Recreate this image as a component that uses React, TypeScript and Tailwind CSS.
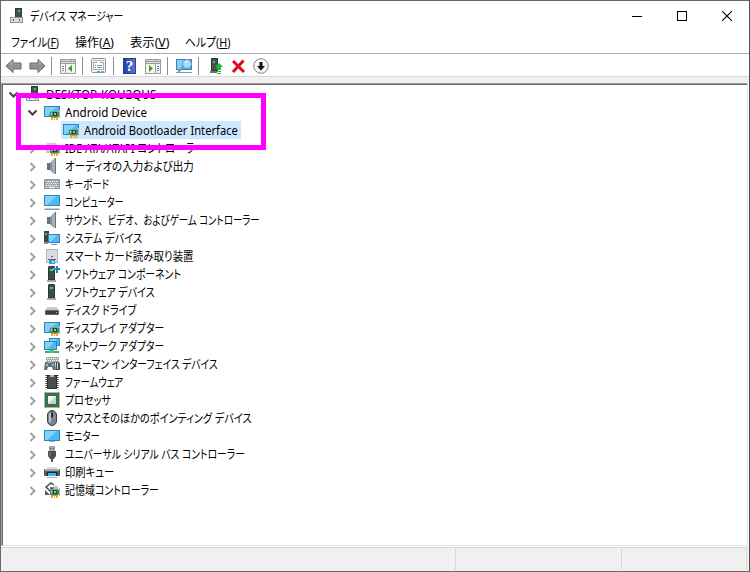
import React, { useLayoutEffect, useRef, useState } from 'react';

function Fit({ w, children, className = '' }: { w: number; children: React.ReactNode; className?: string }) {
  const ref = useRef<HTMLSpanElement>(null);
  const [scale, setScale] = useState(1);
  useLayoutEffect(() => {
    const measure = () => {
      if (ref.current && ref.current.offsetWidth) setScale(w / ref.current.offsetWidth);
    };
    measure();
    document.fonts.ready.then(measure);
  }, [w]);
  return (
    <span className={`block shrink-0 pt-0.5 whitespace-nowrap ${className}`} style={{ width: w }}>
      <span ref={ref} className="inline-block origin-left whitespace-nowrap" style={{ transform: `scaleX(${scale})` }}>
        {children}
      </span>
    </span>
  );
}

/** Keeps the full-width advance of the ideographic comma while kana stay proportional. */
const spaced = (label: string) =>
  label.split(/(、)/).map((part, i) =>
    part === '、' ? <span key={i} className="[font-feature-settings:normal]">、</span> : part,
  );

type SvgProps = { children: React.ReactNode; w?: number; h?: number };
const Svg = ({ children, w = 16, h = 16 }: SvgProps) => (
  <svg width={w} height={h} viewBox={`0 0 ${w} ${h}`} className="block shrink-0">
    {children}
  </svg>
);

const Card = () => (
  <g>
    <rect x="15" y="6" width="1" height="8" fill="#a9b2ae" />
    <rect x="6" y="7" width="9" height="6" fill="#3f8a6c" />
    <rect x="6" y="7" width="9" height="1" fill="#76b398" />
    <rect x="9" y="8" width="4" height="4" fill="#1d4a3a" />
    <rect x="10" y="9" width="2" height="2" fill="#8cc4ae" />
    <rect x="7" y="9" width="1" height="2" fill="#b4dccb" />
    <rect x="7" y="13" width="7" height="1" fill="#e29a12" />
    <path d="M7 14h2v2H7zM10 14h1v2h-1zM12 14h2v2h-2z" fill="#f7ad1b" />
  </g>
);

const Blue = ({ x, y, w, h }: { x: number; y: number; w: number; h: number }) => (
  <g>
    <rect x={x} y={y} width={w} height={h} fill="#2f86b8" />
    <rect x={x + 1} y={y + 1} width={w - 2} height={h - 2} fill="#4db8f6" />
    <path d={`M${x + 1} ${y + 1}h${w - 4}L${x + 3} ${y + h - 1}h-2z`} fill="#84d1fc" />
  </g>
);

const Tower = () => (
  <g>
    <path d="M5 1l1-1h5l1 1v13H5z" fill="#30363a" />
    <rect x="6" y="1" width="5" height="12" fill="#43494d" />
    <rect x="7" y="3" width="3" height="2" fill="#28e45a" />
    <rect x="4" y="14" width="9" height="2" fill="#a3a7aa" />
  </g>
);

const Speaker = () => (
  <g>
    <path d="M3 5h3v7H3z" fill="#697078" />
    <path d="M6 5l4-4v15l-4-4z" fill="#858e96" />
    <path d="M8 3l3-3v16l-3-3z" fill="#a7afb7" />
    <path d="M11.5 0v16" stroke="#6b747c" />
  </g>
);

const ICONS: Record<string, React.ReactNode> = {
  adapter: <g><Blue x={0} y={2} w={16} h={11} /><Card /></g>,
  ide: (
    <g>
      <path d="M3 3h9l3 5v5H2V8z" fill="#c9cccf" />
      <Card />
    </g>
  ),
  speaker: <Speaker />,
  keyboard: (
    <g>
      <rect x="0" y="3" width="16" height="10" fill="#8f979d" />
      <rect x="1" y="4" width="14" height="8" fill="#a4abb0" />
      <path d="M2 5.5h12M3 7.5h11M2 9.5h12" stroke="#f7f8f9" strokeDasharray="1 1" />
      <path d="M2 11.5h1M5 11.5h6M13 11.5h1" stroke="#fff" />
    </g>
  ),
  computer: (
    <g>
      <Blue x={0} y={1} w={16} h={11} />
      <rect x="1" y="14" width="14" height="1" fill="#c3ced8" />
      <rect x="0" y="15" width="16" height="1" fill="#8fa3b5" />
    </g>
  ),
  system: (
    <g>
      <rect x="0" y="1" width="5" height="12" fill="#3f4548" />
      <rect x="1" y="3" width="2" height="2" fill="#28d35d" />
      <rect x="0" y="12" width="4" height="2" fill="#8b9194" />
      <Blue x={4} y={4} w={12} h={9} />
      <rect x="7" y="14" width="6" height="1" fill="#8499a8" />
    </g>
  ),
  smartcard: (
    <g>
      <rect x="2" y="1" width="12" height="14" rx="1" fill="#aab2b9" />
      <rect x="3" y="2" width="10" height="12" fill="#d9dde1" />
      <rect x="7" y="8" width="2" height="1" fill="#55606a" />
      <rect x="4" y="11" width="8" height="1" fill="#5c6871" />
      <rect x="5" y="12" width="6" height="4" fill="#2ca5e8" />
      <rect x="8" y="13" width="2" height="2" fill="#a5dcfa" />
    </g>
  ),
  component: (
    <g>
      <g transform="translate(-1 0)"><Tower /></g>
      <path d="M12 0h2v2h2v2h-2v3h-2V4h-2V2h2z" fill="#1387d2" />
      <path d="M9 2h2v2H9z" fill="#4bb2f0" />
    </g>
  ),
  software: <g transform="translate(-1 0)"><Tower /></g>,
  disk: (
    <g>
      <path d="M3 5h10l2 4H1z" fill="#c8cbce" />
      <rect x="1" y="8" width="14" height="5" rx="1" fill="#64696d" />
      <rect x="2" y="9" width="12" height="3" fill="#383d40" />
      <rect x="12" y="10" width="1" height="1" fill="#55eb77" />
    </g>
  ),
  network: (
    <g>
      <Blue x={5} y={0} w={11} h={8} />
      <Blue x={0} y={3} w={13} h={9} />
      <path d="M1 14h14" stroke="#46aa55" strokeWidth="2" />
      <rect x="5" y="12" width="5" height="3" fill="#4ec963" />
    </g>
  ),
  hid: (
    <g>
      <path d="M2 1h13v6H2z" fill="#a5adb3" />
      <path d="M3 2.5h12M2 4.5h13" stroke="#fff" strokeDasharray="1 1" />
      <path d="M1 6h2l1 1h4l1-1h2l1 8H9l-1-3H4l-1 3H0z" fill="#61707a" />
      <circle cx="3" cy="9" r="1" fill="#c4cdd3" />
      <circle cx="9" cy="9" r="1" fill="#c4cdd3" />
      <path d="M12 6h2q2 0 2 3v5h-4z" fill="#424e56" />
      <path d="M13.5 7v6" stroke="#d4d9dc" />
    </g>
  ),
  firmware: (
    <g>
      <path d="M2.5 1v14M13.5 1v14" stroke="#343434" strokeWidth="2" strokeDasharray="1 1" />
      <rect x="3" y="1" width="10" height="14" fill="#303234" />
      <rect x="4" y="2" width="8" height="12" fill="#4b4d4f" />
      <path d="M6 1h4v2H6z" fill="#b8babb" />
    </g>
  ),
  processor: (
    <g>
      <rect x=".5" y=".5" width="15" height="15" fill="#5e9275" stroke="#b8a35a" strokeDasharray="1 1" />
      <rect x="1" y="1" width="14" height="14" fill="#356f52" />
      <rect x="4" y="4" width="8" height="8" fill="#c6cfca" />
      <path d="M4 4h8L4 12z" fill="#f3f6f4" />
    </g>
  ),
  mouse: (
    <g>
      <rect x="3.5" y=".5" width="9" height="15" rx="4.5" fill="#7d8890" stroke="#3a4147" />
      <path d="M6 3v9" stroke="#b7c2ca" strokeWidth="2" />
      <path d="M8 1v7" stroke="#353c42" />
      <rect x="7" y="3" width="2" height="4" rx="1" fill="#21272b" />
    </g>
  ),
  monitor: (
    <g>
      <Blue x={0} y={2} w={16} h={11} />
      <rect x="5" y="13" width="6" height="1" fill="#9bb9cc" />
    </g>
  ),
  usb: (
    <g>
      <rect x="5" y="0" width="6" height="5" fill="#a3a8ac" />
      <path d="M6 2h1v1H6zM9 2h1v1H9z" fill="#454a4e" />
      <path d="M4 5h8v5l-2 3H6l-2-3z" fill="#4c5053" />
      <path d="M6 6v4" stroke="#858a8d" />
      <path d="M8 13v3" stroke="#56595c" strokeWidth="2" />
    </g>
  ),
  printer: (
    <g>
      <path d="M3 3h10v3H3z" fill="#d9dde0" />
      <rect x="0" y="5" width="16" height="7" rx="1" fill="#51575b" />
      <rect x="1" y="5" width="14" height="2" fill="#a6abb0" />
      <path d="M3 8h10v4H3z" fill="#202427" />
      <path d="M4 9h8v5H4z" fill="#fff" />
      <path d="M4 9h8v3H4z" fill="#36b9ea" />
      <path d="M3 13.5h10" stroke="#aeb4b8" />
    </g>
  ),
  storage: (
    <g>
      <path d="M10 3L7 1 2 5l4 4 3-3H6" fill="none" stroke="#474b4e" strokeWidth="1.5" />
      <path d="M1 8v5h5" fill="#555a5e" />
      <path d="M11 3l3 2v2h-4z" fill="#b9bdc0" />
      <Card />
    </g>
  ),
};

const Server = () => (
  <Svg w={14} h={16}>
    <rect x="5" y="0" width="7" height="10" fill="#34393b" />
    <rect x="6" y="1" width="5" height="8" fill="#484e50" />
    <rect x="8" y="2" width="2" height="2" fill="#20dd56" />
    <rect x="0" y="9" width="13" height="6" fill="#90969a" />
    <rect x="1" y="10" width="11" height="4" fill="#dadddd" />
    <rect x="3" y="11" width="1" height="2" fill="#555c60" />
    <rect x="9" y="11" width="1" height="2" fill="#555c60" />
  </Svg>
);

const Chevron = ({ open }: { open?: boolean }) => (
  <Svg w={11} h={11}>
    {open ? (
      <path d="M1.5 3.5L5.5 7.5 9.5 3.5" fill="none" stroke="#404040" strokeWidth="2" />
    ) : (
      <path d="M3.5 2L7.5 6 3.5 10" fill="none" stroke="#a3a3a3" strokeWidth="2" />
    )}
  </Svg>
);

const ROWS: [string, string, number][] = [
  ['ide', 'IDE ATA/ATAPI コントローラー', 140],
  ['speaker', 'オーディオの入力および出力', 129],
  ['keyboard', 'キーボード', 44],
  ['computer', 'コンピューター', 59],
  ['speaker', 'サウンド、ビデオ、およびゲーム コントローラー', 195],
  ['system', 'システム デバイス', 77],
  ['smartcard', 'スマート カード読み取り装置', 129],
  ['component', 'ソフトウェア コンポーネント', 116],
  ['software', 'ソフトウェア デバイス', 90],
  ['disk', 'ディスク ドライブ', 71],
  ['adapter', 'ディスプレイ アダプター', 99],
  ['network', 'ネットワーク アダプター', 99],
  ['hid', 'ヒューマン インターフェイス デバイス', 153],
  ['firmware', 'ファームウェア', 58],
  ['processor', 'プロセッサ', 46],
  ['mouse', 'マウスとそのほかのポインティング デバイス', 187],
  ['monitor', 'モニター', 35],
  ['usb', 'ユニバーサル シリアル バス コントローラー', 180],
  ['printer', '印刷キュー', 49],
  ['storage', '記憶域コントローラー', 94],
];

const MENU: [string, string, number][] = [
  ['ファイル', 'F', 48],
  ['操作', 'A', 39],
  ['表示', 'V', 39],
  ['ヘルプ', 'H', 46],
];

const Sep = ({ className }: { className: string }) => <div className={`h-[18px] w-px shrink-0 bg-[#8d8d8d] ${className}`} />;

const Arrow = () => (
  <Svg w={17} h={16}>
    <defs>
      <linearGradient id="arrow" x1="0" y1="0" x2="0" y2="1">
        <stop offset="0" stopColor="#c4c4c4" />
        <stop offset=".5" stopColor="#8c8c8c" />
        <stop offset="1" stopColor="#aaa" />
      </linearGradient>
    </defs>
    <path d="M1 8L8 1.5V5h8v6H8v3.5z" fill="url(#arrow)" stroke="#656565" strokeLinejoin="round" />
  </Svg>
);

const PaneWindow = ({ flip }: { flip?: boolean }) => (
  <Svg w={16} h={15}>
    <rect x="0" y="0" width="16" height="15" fill="#969ba0" />
    <rect x="1" y="1" width="10" height="1" fill="#d7dadd" />
    <path d="M12 1h1v1h-1zM14 1h1v1h-1z" fill="#fff" />
    <rect x="1" y="3" width="14" height="1" fill="#dfe2e5" />
    <rect x="1" y="5" width="14" height="9" fill="#f5f5f3" />
    {flip ? (
      <g>
        <path d="M10.5 5v9" stroke="#969ba0" />
        <path d="M12 7.5h2M12 9.5h2M12 11.5h2" stroke="#5283c0" />
        <path d="M4 6l4 3.5L4 13z" fill="#38a329" />
      </g>
    ) : (
      <g>
        <path d="M5.5 5v9" stroke="#969ba0" />
        <path d="M2 7.5h2M2 9.5h2M2 11.5h2" stroke="#5283c0" />
        <path d="M12 6L8 9.5l4 3.5z" fill="#38a329" />
      </g>
    )}
  </Svg>
);

function Toolbar() {
  return (
    <div className="flex h-[22px] items-center pt-0.5 pl-1">
      <Arrow />
      <div className="ml-[7px] -scale-x-100"><Arrow /></div>
      <Sep className="ml-[5px]" />
      <div className="ml-2"><PaneWindow /></div>
      <Sep className="ml-1.5" />
      <div className="ml-2">
        <Svg w={16} h={16}>
          <rect x=".5" y=".5" width="14" height="14" rx="1" fill="#f1f2f3" stroke="#8d9499" />
          <path d="M2 2.5h11" stroke="#b4b9be" />
          <rect x="2.5" y="4.5" width="10" height="7" fill="#fff" stroke="#a4abb1" />
          <path d="M6 4.5h3" stroke="#fff" />
          <path d="M4 7.5h1M4 9.5h1" stroke="#5184bc" />
          <path d="M6 7.5h5M6 9.5h5" stroke="#8e969e" />
          <path d="M6 13.5h3" stroke="#20b2e8" />
          <path d="M10 13.5h3" stroke="#9ba2a8" />
        </Svg>
      </div>
      <Sep className="ml-1.5" />
      <div className="ml-[9px]">
        <div className="flex h-4 w-[13px] items-center justify-center border border-[#263f9b] bg-linear-to-r from-[#1f409f] to-[#5877d8] font-['Liberation_Serif',serif] text-[15px] leading-4 font-bold text-white">?</div>
      </div>
      <div className="ml-[9px]"><PaneWindow flip /></div>
      <Sep className="ml-1.5" />
      <div className="ml-2">
        <Svg w={17} h={16}>
          <Blue x={0} y={1} w={16} h={11} />
          <path d="M0 14.5h16" stroke="#8797a4" />
          <path d="M8 9l-6 5" stroke="#8099ad" strokeWidth="2" />
          <circle cx="11" cy="6" r="4.5" fill="#a4dbf9" stroke="#6c91a9" />
          <path d="M9 5q1-2 3-2" fill="none" stroke="#fff" />
        </Svg>
      </div>
      <Sep className="ml-[5px]" />
      <div className="ml-[11px]">
        <Svg w={14} h={16}>
          <rect x="1" y="0" width="7" height="13" fill="#34383b" />
          <rect x="2" y="1" width="5" height="11" fill="#4a4f52" />
          <rect x="3" y="3" width="2" height="2" fill="#28e24e" />
          <path d="M0 13h7v2H0z" fill="#6e7578" />
          <path d="M9 5l4 4h-2v3H7V9H5z" fill="#22b637" />
          <path d="M7 13.5h4M7 15.5h4" stroke="#22b637" />
        </Svg>
      </div>
      <div className="ml-[7px]">
        <Svg w={15} h={16}>
          <path d="M2 3L13 14M12.5 2.5L2 14" stroke="#db0b18" strokeWidth="3" />
        </Svg>
      </div>
      <div className="ml-[7px]">
        <Svg w={16} h={16}>
          <circle cx="8" cy="8" r="7.3" fill="#f8f8f8" stroke="#858585" />
          <path d="M6.5 4h3v4H12l-4 4.5L4 8h2.5z" fill="#111" />
        </Svg>
      </div>
    </div>
  );
}

export default function App() {
  return (
    <div className="relative flex h-[572px] w-[750px] flex-col overflow-hidden border border-[#696969] border-r-[#4d4d4d] bg-white font-['Noto_Sans','Noto_Sans_CJK_JP',sans-serif] text-xs text-black [font-feature-settings:'palt']">
      <header className="flex h-[29px] shrink-0 items-center pl-[9px]">
        <Server />
        <Fit w={93} className="ml-1.5">デバイス マネージャー</Fit>
        <div className="ml-auto flex items-center gap-[35px] pr-[17px]">
          <Svg w={10} h={10}><path d="M0 5.5h10" stroke="#000" /></Svg>
          <Svg w={10} h={10}><rect x=".5" y=".5" width="9" height="9" fill="none" stroke="#000" /></Svg>
          <Svg w={10} h={10}><path d="M0 0l10 10M10 0L0 10" stroke="#000" strokeWidth="1.1" /></Svg>
        </div>
      </header>
      <nav className="flex h-[23px] shrink-0 items-center gap-4 pl-2.5">
        {MENU.map(([label, key, w]) => (
          <Fit key={key} w={w}>{label}(<span className="underline underline-offset-1">{key}</span>)</Fit>
        ))}
      </nav>
      <div className="h-6 shrink-0 border-t border-b border-t-[#a9adb3] border-b-[#d9d9d9]">
        <Toolbar />
      </div>
      <div className="h-1.5 shrink-0 bg-[#f0f0f0]" />
      <main className="mr-px h-[463px] shrink-0 border border-t-[#a0a0a0] border-r-[#e3e3e3] border-b-[#e3e3e3] border-l-[#a0a0a0]">
        <div className="h-full border-t border-l border-[#696969]">
          <div className="flex h-[18px] items-center pl-[5px]">
            <Chevron open />
            <div className="ml-[7px]"><Server /></div>
            <Fit w={110} className="ml-1.5">DESKTOP-KOU2QUS</Fit>
          </div>
          <div className="flex h-[18px] items-center pl-6">
            <Chevron open />
            <div className="ml-1.5"><Svg>{ICONS.adapter}</Svg></div>
            <Fit w={82} className="ml-[5px]">Android Device</Fit>
          </div>
          <div className="flex h-[18px] items-center pl-[58px]">
            <div className="flex h-[18px] w-[180px] items-center bg-[#cce8ff] pl-0.5">
              <Svg>{ICONS.adapter}</Svg>
              <Fit w={154} className="ml-[5px]">Android Bootloader Interface</Fit>
            </div>
          </div>
          {ROWS.map(([icon, label, w]) => (
            <div key={label} className="flex h-[18px] items-center pl-6">
              <Chevron />
              <div className="ml-1.5"><Svg>{ICONS[icon]}</Svg></div>
              <Fit w={w} className="ml-[5px]">{spaced(label)}</Fit>
            </div>
          ))}
        </div>
      </main>
      <div className="h-px shrink-0" />
      <footer className="flex flex-1 border-t border-[#d7d7d7] bg-[#f0f0f0] py-px">
        <div className="w-[455px] border-r border-[#d7d7d7]" />
        <div className="w-[166px] border-r border-[#d7d7d7]" />
        <div className="w-[125px] border-r border-[#d7d7d7]" />
      </footer>
      <div className="absolute top-[92px] left-[15px] h-[57px] w-[250px] border-5 border-[#ff00ff]" />
    </div>
  );
}
